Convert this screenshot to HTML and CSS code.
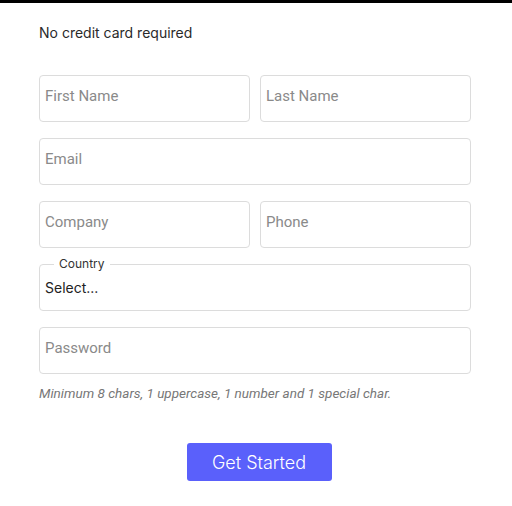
FILE: index.html
```html
<!DOCTYPE html>
<html>
<head>
<meta charset="utf-8">
<link rel="stylesheet" href="styles.css">
</head>
<body>
<div class="topbar"></div>
<main class="wrap">
  <p class="note">No credit card required</p>
  <form class="form">
    <div class="row two">
      <input class="field" placeholder="First Name">
      <input class="field" placeholder="Last Name">
    </div>
    <div class="row">
      <input class="field" placeholder="Email">
    </div>
    <div class="row two">
      <input class="field" placeholder="Company">
      <input class="field" placeholder="Phone">
    </div>
    <fieldset class="select-box">
      <legend>Country</legend>
      <div class="select-val">Select...</div>
    </fieldset>
    <div class="row">
      <input class="field" type="password" placeholder="Password">
    </div>
    <p class="hint">Minimum 8 chars, 1 uppercase, 1 number and 1 special char.</p>
    <div class="actions">
      <button type="button" class="btn">Get Started</button>
    </div>
  </form>
</main>
</body>
</html>
```
FILE: styles.css
```css
* { box-sizing: border-box; }
html, body { margin: 0; padding: 0; background: #fff; }
body { font-family: Inter, "Noto Sans", sans-serif; color: #222; }
.topbar { height: 3px; background: #000; }
.wrap { padding: 0 41px 0 39px; }
.note { margin: 21px 0 0; font-size: 14px; line-height: 17px; color: #2a2a2a; }
.form { margin-top: 34px; display: flex; flex-direction: column; gap: 16px; }
.row { display: flex; gap: 10px; }
.row.two .field { flex: 1; min-width: 0; }
.field {
  width: 100%; height: 47px; border: 1px solid #dcdcdc; border-radius: 4px;
  padding: 0 5px 5px; font-family: Roboto, "Noto Sans", sans-serif; font-size: 15px; color: #333;
  outline: none; background: #fff;
}
.field::placeholder { color: #8a8a8a; }
.select-box {
  margin: -6px 0 0; height: 53px; border: 1px solid #dcdcdc; border-radius: 4px;
  padding: 0 5px;
}
.select-box legend {
  font-family: Inter, sans-serif; font-size: 12px; color: #333; padding: 0 5px; margin-left: 9px; line-height: 12px;
}
.select-val { font-family: Inter, sans-serif; font-size: 14px; color: #222; margin-top: 9px; }
.hint { margin: -5px 0 0; font-family: Roboto, sans-serif; font-style: italic; font-size: 13.5px; color: #777; }
.actions { display: flex; justify-content: center; margin-top: 26px; padding-left: 8px; }
.btn {
  width: 145px; height: 38px; border: none; border-radius: 3px; background: #5a60fb;
  color: #fff; font-family: Inter, sans-serif; font-size: 18px; font-weight: 300; cursor: pointer;
}
```
